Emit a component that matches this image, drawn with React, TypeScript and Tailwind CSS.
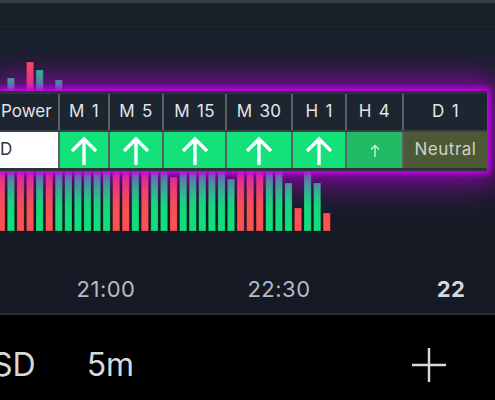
import React from "react";

type Bar = { c: "r" | "g"; top?: number };

const RED = "#fa5252";
const GREEN = "#12df7c";

// page-y of the visible bar tops, anything else hides behind the overlay
const bars: Bar[] = [
  { c: "r" }, { c: "g", top: 78 }, { c: "r" }, { c: "r", top: 62 }, { c: "g", top: 70 },
  { c: "r" }, { c: "g", top: 80 }, { c: "g" }, { c: "g" }, { c: "g" },
  { c: "g" }, { c: "g" }, { c: "r" }, { c: "r" }, { c: "g" },
  { c: "r" }, { c: "g" }, { c: "g" }, { c: "r", top: 177 }, { c: "g" },
  { c: "g" }, { c: "g" }, { c: "g", top: 92 }, { c: "g" }, { c: "g", top: 179 },
  { c: "r" }, { c: "r" }, { c: "r" }, { c: "g" }, { c: "g" },
  { c: "g", top: 183 }, { c: "r", top: 208 }, { c: "g", top: 170 }, { c: "g", top: 183 }, { c: "r", top: 213 },
];

const columns = ["M 1", "M 5", "M 15", "M 30", "H 1", "H 4", "D 1"];
const gridCols = "grid grid-cols-[58px_50px_54px_63px_66px_54px_57px_85px]";

function BigArrow() {
  return (
    <svg width="28" height="29" viewBox="0 0 28 29" fill="none">
      <path d="M14 29V3M2 15L14 3l12 12" stroke="#ffffff" strokeWidth="3.4" />
    </svg>
  );
}

function SmallArrow() {
  return (
    <svg width="10" height="13" viewBox="0 0 10 13" fill="none">
      <path d="M5 13V1.5M1 5.5l4-4 4 4" stroke="#c9f4d9" strokeWidth="1.4" />
    </svg>
  );
}

function ChartBars() {
  return (
    <svg width="495" height="262" viewBox="0 0 495 262" className="block">
      <line x1="0" y1="24" x2="495" y2="24" stroke="#1e2933" strokeWidth="2" strokeDasharray="2 2" />
      {bars.map((bar, i) => {
        const x = -2.3 + 9.57 * i;
        const top = (bar.top ?? 120) - 3;
        return (
          <rect
            key={i}
            x={x}
            y={top}
            width={7.3}
            height={228 - top}
            fill={bar.c === "r" ? RED : GREEN}
            stroke="rgba(0,0,0,0.22)"
            strokeWidth="1"
          />
        );
      })}
    </svg>
  );
}

function SignalTable() {
  const cell = "flex items-center justify-center border-l-2 border-[#5b6068]";
  return (
    <div className="absolute left-0 top-[88px] border-y-[3px] border-[#2d3239] bg-[#1c2530] shadow-[0_0_5px_3px_#c400ea,0_0_32px_10px_rgba(182,0,222,0.8)]">
      <div className={`${gridCols} h-[36px] text-[17px] text-[#e3e5e9]`}>
        <div className="flex items-center pl-px">Power</div>
        {columns.map((name) => (
          <div key={name} className={`${cell} tracking-[0.3px] [word-spacing:2px]`}>
            {name}
          </div>
        ))}
      </div>
      <div className={`${gridCols} h-[38px] border-t-2 border-[#3b4148] text-[17px] tracking-[0.5px]`}>
        <div className="flex items-center bg-white text-[#333333]">D</div>
        {[0, 1, 2, 3, 4].map((i) => (
          <div key={i} className={`${cell} bg-[#13e27b]`}>
            <BigArrow />
          </div>
        ))}
        <div className={`${cell} bg-[#22bb65]`}>
          <SmallArrow />
        </div>
        <div className={`${cell} bg-[#4d5837] text-[#cfd2c7]`}>Neutral</div>
      </div>
    </div>
  );
}

export default function App() {
  return (
    <div className="h-[400px] w-[495px] overflow-hidden bg-black font-['Inter','Liberation_Sans',sans-serif]">
      <div className="h-[3px] bg-[#3a3e45]" />

      <div className="relative flex h-[310px] flex-col bg-gradient-to-b from-[#17212a] to-[#151923]">
        <ChartBars />
        <div className="flex h-[48px] items-center text-[22px] tracking-[0.5px] text-[#b6bac2]">
          <div className="w-[212px] text-center">21:00</div>
          <div className="w-[134px] text-center">22:30</div>
          <div className="w-[61px]" />
          <div className="w-[88px] text-center font-bold text-[#d4d6da]">22</div>
        </div>
        <SignalTable />
      </div>

      <div className="h-[2px] bg-[#283040]" />

      <div className="flex h-[85px] items-center pt-[14px] text-[32px] text-[#d9d9d9]">
        <span className="ml-[-8px]">SD</span>
        <span className="ml-[51px]">5m</span>
        <svg className="ml-auto mr-[49px]" width="34" height="34" viewBox="0 0 34 34" fill="none">
          <path d="M17 0v34M0 17h34" stroke="#d9d9d9" strokeWidth="2.4" />
        </svg>
      </div>
    </div>
  );
}
